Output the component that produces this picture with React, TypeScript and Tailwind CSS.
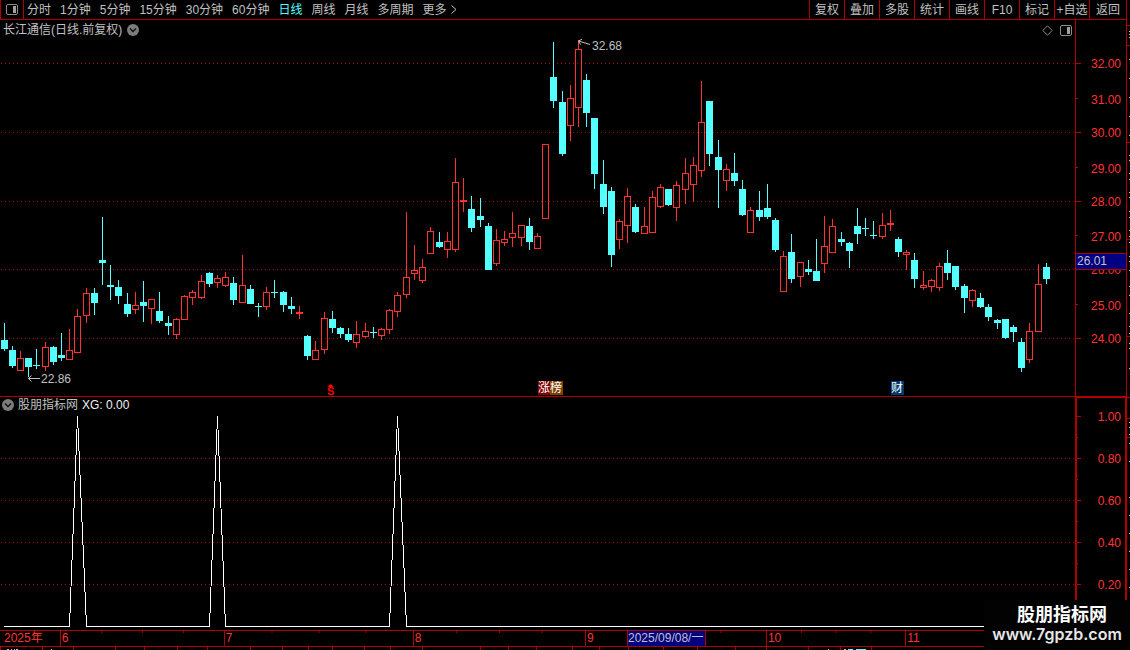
import { useState } from "react";
import clsx from "clsx";

type Candle = {
  x: number;
  high: number;
  top: number;
  bottom: number;
  low: number;
  up: boolean;
};

const PERIODS = [
  "分时",
  "1分钟",
  "5分钟",
  "15分钟",
  "30分钟",
  "60分钟",
  "日线",
  "周线",
  "月线",
  "多周期",
];

const TOOLS = ["复权", "叠加", "多股", "统计", "画线", "F10", "标记", "+自选", "返回"];

/** x, high, body top, body bottom, low, direction - one candle per line */
const CANDLE_DATA = `
4 323 340 349 351 D
12 346 350 366 368 D
20 351 358 371 371 U
28 358 358 367 377 D
36 349 365 366 369 D
45 342 347 367 371 U
53 346 347 362 365 D
61 333 355 358 361 D
69 329 350 360 360 U
77 309 316 353 353 U
86 288 293 316 323 U
94 288 293 303 315 D
102 217 260 263 285 D
110 265 285 287 300 D
118 280 287 296 304 D
127 293 304 314 317 D
135 292 305 310 314 U
143 281 302 306 322 D
151 299 299 309 324 U
159 292 311 321 323 D
168 316 323 326 335 D
176 318 319 335 339 U
184 295 296 320 320 U
192 290 292 298 305 U
201 275 281 298 299 U
209 272 273 284 287 D
217 275 278 283 288 U
225 272 277 286 287 U
233 277 283 300 305 D
242 255 285 303 303 U
250 285 289 304 304 D
258 303 306 307 317 D
266 287 292 307 310 U
274 280 292 293 298 D
283 291 292 305 312 D
291 297 306 309 314 D
299 306 312 314 319 U
307 335 336 356 360 D
315 341 350 360 360 U
324 312 318 350 354 U
332 311 319 328 333 D
340 327 328 334 338 D
348 328 334 340 342 D
356 321 334 343 348 U
365 323 331 337 338 U
373 327 332 333 338 D
381 328 329 336 340 U
389 309 310 330 334 U
397 292 295 312 317 U
406 212 277 295 298 U
414 245 270 274 280 U
422 259 267 281 283 U
430 227 231 254 254 U
439 232 242 247 248 D
447 232 241 250 258 U
455 158 182 250 252 U
463 178 200 202 212 U
471 196 209 228 232 D
480 198 216 220 227 D
488 223 226 270 270 D
496 229 240 264 266 U
504 231 239 243 246 U
512 212 233 238 247 U
521 225 225 238 246 U
529 218 226 242 250 D
537 233 236 249 249 U
545 144 144 219 219 U
553 42 77 101 108 D
562 91 102 154 156 D
570 85 98 126 141 U
578 40 49 108 127 U
586 74 80 113 127 D
594 118 118 174 189 D
603 160 184 207 214 D
611 187 191 255 267 D
619 219 221 240 249 U
627 188 196 226 243 U
635 204 207 232 233 D
644 207 226 234 234 U
652 191 197 233 233 U
660 184 187 207 208 U
668 189 189 205 206 D
676 181 185 208 221 U
685 158 173 190 204 U
693 157 165 185 202 U
701 81 122 171 177 U
709 101 101 154 166 D
718 140 157 170 208 D
726 164 169 181 191 U
734 153 173 181 186 D
742 180 189 215 216 D
750 207 210 233 233 U
759 191 210 217 221 D
767 184 208 217 219 D
775 218 220 250 252 D
783 251 256 292 292 U
791 234 252 279 283 D
800 262 262 277 287 U
808 260 269 272 275 D
816 239 271 281 281 D
824 216 246 264 273 U
832 219 226 253 253 U
841 232 239 242 246 D
849 242 243 251 268 D
857 208 226 234 244 D
865 218 228 229 236 D
873 221 235 236 239 D
882 213 225 237 239 U
890 210 223 225 231 U
898 237 239 252 257 D
906 250 252 255 270 U
914 253 260 279 288 D
923 271 285 288 290 U
931 279 280 287 292 U
939 263 266 288 291 U
947 250 263 273 280 D
955 266 266 287 290 D
964 284 286 298 313 D
972 289 290 301 307 U
980 293 298 307 308 D
988 304 307 317 321 D
997 319 320 323 329 D
1005 319 319 338 339 D
1013 325 327 332 342 D
1021 338 342 368 372 D
1029 323 331 360 363 U
1038 264 284 332 332 U
1046 263 267 279 284 D
`;

const CANDLES: Candle[] = CANDLE_DATA.trim()
  .split("\n")
  .map((line) => {
    const [x, high, top, bottom, low, dir] = line.split(" ");
    return { x: +x, high: +high, top: +top, bottom: +bottom, low: +low, up: dir === "U" };
  });

const PRICE_TICKS = [
  { label: "32.00", y: 63, text: 68 },
  { label: "31.00", y: 98, text: 104 },
  { label: "30.00", y: 132, text: 137 },
  { label: "29.00", y: 167, text: 173 },
  { label: "28.00", y: 201, text: 206 },
  { label: "27.00", y: 235, text: 241 },
  { label: "26.00", y: 269, text: 274 },
  { label: "25.00", y: 304, text: 310 },
  { label: "24.00", y: 338, text: 343 },
];

const SIGNAL_TICKS = [
  { label: "1.00", y: 416 },
  { label: "0.80", y: 458 },
  { label: "0.60", y: 500 },
  { label: "0.40", y: 542 },
  { label: "0.20", y: 584 },
];

const MONTHS = [
  { label: "6", span: 164 },
  { label: "7", span: 189 },
  { label: "8", span: 172 },
  { label: "9", span: 181 },
  { label: "10", span: 139 },
  { label: "11", span: 221 },
];

const CHART_WIDTH = 1075;

const NEXT_PANE_TICKS = [
  0, 42, 73, 115, 144, 177, 207, 250, 282, 308, 332, 364, 390, 422, 480, 508, 536, 572, 599, 628,
  663, 697, 735, 766, 808, 840, 871,
];

const SIDE_TICKS = [25, 45, 142, 239, 336, 397, 418, 437];
const SIDE_DOTS = [
  31, 34, 37, 59, 78, 97, 116, 135, 155, 160, 173, 179, 192, 197, 211, 217, 230, 236, 242, 256, 261,
  270, 286, 295, 313, 326, 333, 343, 348, 368, 422, 427, 434, 443, 461, 497, 515, 533, 551, 569, 587,
];

/** Position over the chart as a share of its width */
const at = (x: number) => ({ left: `${(x / CHART_WIDTH) * 100}%` });

function PanelIcon() {
  return (
    <svg width="12" height="11" viewBox="0 0 12 11" fill="none" aria-hidden="true">
      <rect x="0.5" y="0.5" width="11" height="10" rx="1.5" stroke="#8c8c8c" />
      <rect x="7" y="2" width="3" height="7" fill="#a0a0a0" />
    </svg>
  );
}

function ChevronDot() {
  return (
    <svg width="12" height="12" viewBox="0 0 12 12" fill="none" aria-hidden="true">
      <circle cx="6" cy="6" r="6" fill="#7c7c7c" />
      <path d="M3 4.5 6 7.5 9 4.5" stroke="#101010" strokeWidth="1.4" />
    </svg>
  );
}

function GridLine({ y }: { y: number }) {
  return <path d={`M1 ${y + 0.5}H${CHART_WIDTH}`} stroke="#a00000" strokeDasharray="1 3" />;
}

function CandleShape({ candle }: { candle: Candle }) {
  const { x, high, top, bottom, low, up } = candle;
  if (!up) {
    return (
      <g fill="#54ffff">
        <rect x={x} y={high} width="1" height={low - high} />
        <rect x={x - 3} y={top} width="7" height={bottom - top} />
      </g>
    );
  }
  return (
    <g fill="#ff3232">
      <rect x={x} y={high} width="1" height={top - high} />
      <rect x={x} y={bottom} width="1" height={low - bottom} />
      <path
        fillRule="evenodd"
        d={`M${x - 3} ${top}h7V${bottom}h-7ZM${x - 2} ${top + 1}V${bottom - 1}h5V${top + 1}Z`}
      />
    </g>
  );
}

function Toolbar() {
  const [period, setPeriod] = useState("日线");

  return (
    <header className="flex h-5 items-stretch justify-between border-b border-l border-[#b00000] whitespace-nowrap">
      <nav className="flex">
        <button
          aria-label="侧栏"
          className="flex w-[23px] items-center justify-center border-r border-[#b00000] pr-px"
        >
          <PanelIcon />
        </button>
        <div className="flex items-center gap-[9px] pl-[3px]">
          {PERIODS.map((name) => (
            <button
              key={name}
              onClick={() => setPeriod(name)}
              className={clsx(name === period && "text-[#54ffff]")}
            >
              {name}
            </button>
          ))}
          <button className="flex items-center gap-1">
            更多
            <svg width="6" height="9" viewBox="0 0 6 9" fill="none" aria-hidden="true">
              <path d="M0.5 0.5 5 4.5 0.5 8.5" stroke="#c0c0c0" />
            </svg>
          </button>
        </div>
      </nav>
      <div className="flex">
        {TOOLS.map((name) => (
          <button
            key={name}
            className="w-[35px] border-l border-[#b00000] text-center last:w-[37px]"
          >
            {name}
          </button>
        ))}
      </div>
    </header>
  );
}

function PricePane() {
  return (
    <section className="flex border-b border-[#b00000]">
      <div className="min-w-0 flex-1">
        <div className="flex h-[18px] items-end gap-[5px] px-[3px]">
          <h1>长江通信(日线.前复权)</h1>
          <button aria-label="展开" className="flex h-4 items-center">
            <ChevronDot />
          </button>
          <div className="ml-auto flex h-4 items-center gap-[7px]">
            <button aria-label="标注">
              <svg width="11" height="11" viewBox="0 0 11 11" fill="none" aria-hidden="true">
                <path d="M5.5 0.8 10.2 5.5 5.5 10.2 0.8 5.5Z" stroke="#8c8c8c" />
              </svg>
            </button>
            <button aria-label="面板">
              <PanelIcon />
            </button>
          </div>
        </div>
        <div className="relative">
          <svg
            className="block h-[358px] w-full"
            viewBox={`0 38 ${CHART_WIDTH} 358`}
            preserveAspectRatio="none"
            shapeRendering="crispEdges"
          >
            {PRICE_TICKS.filter((_, i) => i % 2 === 0).map((tick) => (
              <GridLine key={tick.label} y={tick.y} />
            ))}
            {CANDLES.map((candle) => (
              <CandleShape key={candle.x} candle={candle} />
            ))}
          </svg>

          {/* High and low markers */}
          <div className="absolute top-0 flex items-start gap-0.5" style={at(578)}>
            <svg width="12" height="8" viewBox="0 0 12 8" fill="none" aria-hidden="true">
              <path d="M0.5 3 12 6.5M0.5 3 4 1.2M0.5 3 2.5 6.5" stroke="#c0c0c0" />
            </svg>
            <span className="leading-4">32.68</span>
          </div>
          <div className="absolute top-[332px] flex items-center gap-px" style={at(28)}>
            <svg width="12" height="8" viewBox="0 0 12 8" fill="none" aria-hidden="true">
              <path d="M0 3.5H12M0.5 3.5 3.5 0.5M0.5 3.5 3.5 6.5" stroke="#c0c0c0" />
            </svg>
            <span className="leading-[18px]">22.86</span>
          </div>

          {/* Event markers */}
          <div
            className="absolute bottom-0 flex flex-col items-center font-bold text-[#ff0000]"
            style={at(327)}
          >
            <svg width="7" height="3" viewBox="0 0 7 3" aria-hidden="true">
              <path d="M0 3 3.5 0 7 3Z" fill="#ff0000" />
            </svg>
            <span className="text-[11px] leading-[9px]">S</span>
          </div>
          <div className="absolute bottom-px flex leading-[14px] text-white" style={at(538)}>
            <span className="bg-[#800000]">涨</span>
            <span className="bg-[#804000] pr-px">榜</span>
          </div>
          <span
            className="absolute bottom-px bg-[#003870] pr-px leading-[14px] text-white"
            style={at(891)}
          >
            财
          </span>
        </div>
      </div>

      <div className="relative w-[51px] border-l border-[#b00000]">
        <svg className="block h-[376px] w-[50px]" viewBox="0 20 50 376">
          {PRICE_TICKS.map((tick, i) => (
            <g key={tick.label}>
              <rect y={tick.y} width={i % 2 ? 2 : 5} height="1" fill="#b00000" />
              <text x="45" y={tick.text} textAnchor="end" fill="#ff3232">
                {tick.label}
              </text>
            </g>
          ))}
        </svg>
        <output className="absolute inset-x-0 top-[233px] h-[17px] border-y border-[#b00000] bg-[#000080] pl-px leading-[15px]">
          26.01
        </output>
      </div>
    </section>
  );
}

function SignalPane() {
  return (
    <section className="flex">
      <div className="min-w-0 flex-1">
        <div className="flex h-4 items-center gap-1 pl-0.5">
          <button aria-label="展开指标">
            <ChevronDot />
          </button>
          <h2>股朋指标网</h2>
          <span className="text-[#f0f0f0]">XG: 0.00</span>
        </div>
        <svg
          className="block h-[217px] w-full"
          viewBox={`0 413 ${CHART_WIDTH} 217`}
          preserveAspectRatio="none"
          shapeRendering="crispEdges"
          fill="none"
        >
          {SIGNAL_TICKS.slice(1).map((tick) => (
            <GridLine key={tick.label} y={tick.y} />
          ))}
          <path
            d="M4 626.5H69.5L77.5 416L86.5 626.5H209.5L217.5 416L225.5 626.5H389.5L397.5 416L406.5 626.5H1046"
            stroke="#ffffff"
          />
        </svg>
      </div>
      <div className="w-[51px] border-t border-r border-l-2 border-[#b00000]">
        <svg className="block h-[232px] w-12" viewBox="0 398 48 232">
          {SIGNAL_TICKS.map((tick) => (
            <g key={tick.label}>
              <rect y={tick.y} width="4" height="1" fill="#b00000" />
              <rect y={tick.y + 21} width="1" height="1" fill="#b00000" />
              <text x="44" y={tick.y + 5} textAnchor="end" fill="#ff3232">
                {tick.label}
              </text>
            </g>
          ))}
        </svg>
      </div>
    </section>
  );
}

function DateAxis() {
  return (
    <footer className="relative flex h-[17px] border-y border-[#b00000] leading-[15px] whitespace-nowrap text-[#ff3232]">
      <div className="min-w-0 basis-0" style={{ flexGrow: 60 }}>
        <span className="pl-1">2025年</span>
      </div>
      {MONTHS.map((month, i) => (
        <div
          key={month.label}
          className="relative min-w-0 basis-0 border-l border-[#b00000]"
          style={{ flexGrow: month.span }}
        >
          <span className="pl-px">{month.label}</span>
          {i < MONTHS.length - 1 && (
            <svg className="absolute inset-x-0 top-0 h-0.5 w-full" stroke="#b00000" aria-hidden="true">
              <line x1="25%" x2="25%" y2="2" />
              <line x1="50%" x2="50%" y2="2" />
              <line x1="75%" x2="75%" y2="2" />
            </svg>
          )}
        </div>
      ))}
      <output
        className="absolute inset-y-0 w-[79px] border-x border-[#b00000] bg-[#000080] text-[#c0c0c0]"
        style={{ left: `${(627 / 1126) * 100}%` }}
      >
        2025/09/08/一
      </output>
    </footer>
  );
}

export default function App() {
  return (
    <div className="relative flex overflow-hidden bg-black font-['Liberation_Sans','Noto_Sans_CJK_SC',sans-serif] text-[12px] leading-4 text-[#c0c0c0]">
      <main className="min-w-0 flex-1 border-r border-[#b00000]">
        <Toolbar />
        <PricePane />
        <SignalPane />
        <DateAxis />
        {/* Top edge of the next pane */}
        <svg className="block h-[3px] w-full" viewBox="0 0 1126 3" preserveAspectRatio="none" aria-hidden="true">
          {NEXT_PANE_TICKS.map((x) => (
            <rect key={x} x={x} width="1" height="3" fill="#b00000" />
          ))}
          <path d="M7 2.5h2m2 0h1m2 0h1m1 0h2M51 2.5h1M828 2.5h1M844 2.5h2" stroke="#c0c0c0" />
          <path d="M848 2.5h5m3 0h10" stroke="#54ffff" />
        </svg>
      </main>

      <svg className="h-[650px] w-[3px] shrink-0" viewBox="0 0 3 650" aria-hidden="true">
        {SIDE_TICKS.map((y) => (
          <rect key={y} y={y} width="3" height="1" fill="#b00000" />
        ))}
        {SIDE_DOTS.map((y) => (
          <rect key={y} x="2" y={y} width="1" height="1" fill="#c0c0c0" />
        ))}
      </svg>

      <div className="absolute right-0 bottom-0 flex h-[50px] w-[146px] flex-col items-center bg-[#020202] pt-[5px] text-white">
        <span className="pl-2.5 text-[18px] leading-5 font-bold">股朋指标网</span>
        <a
          href="#"
          className="font-['Inter',sans-serif] text-[16px] leading-[18px] font-semibold text-[#e6e6e6]"
        >
          www.7gpzb.com
        </a>
      </div>
    </div>
  );
}
